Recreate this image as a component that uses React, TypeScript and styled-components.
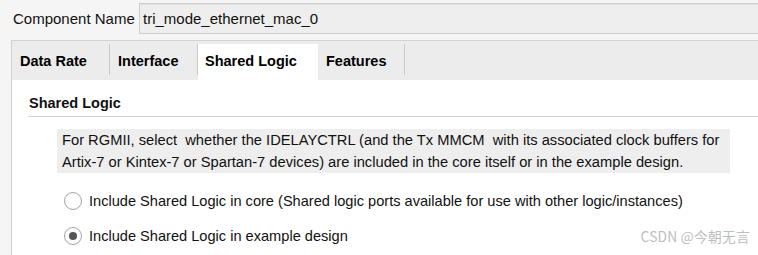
import React from 'react';
import styled, { createGlobalStyle } from 'styled-components';

const GlobalStyle = createGlobalStyle`
  html, body {
    margin: 0;
    padding: 0;
    background: #f5f5f5;
  }
  body {
    font-family: "Liberation Sans", Arial, sans-serif;
    color: #111;
  }
`;

const Page = styled.div`
  position: relative;
  width: 758px;
  height: 255px;
  overflow: hidden;
  display: flex;
  flex-direction: column;
`;

const TopRow = styled.div`
  display: flex;
  align-items: flex-start;
  height: 40px;
  padding: 3px 0 0 13px;
  box-sizing: border-box;
`;

const Label = styled.span`
  width: 126px;
  height: 31px;
  line-height: 31px;
  font-size: 15px;
`;

const NameField = styled.div`
  flex: 1;
  height: 31px;
  box-sizing: border-box;
  background: #eeeeee;
  border: 1px solid #cdcdcd;
  border-right: none;
  box-shadow: inset 0 1px 0 #e2e2e2;
  padding-left: 3px;
  line-height: 29px;
  font-size: 15px;
`;

const Panel = styled.div`
  flex: 1;
  margin-left: 11px;
  border-top: 1px solid #d2d2d2;
  border-left: 1px solid #cfcfcf;
  display: flex;
  flex-direction: column;
`;

const TabBar = styled.div`
  display: flex;
  height: 39px;
  background: #ececec;
  padding-top: 3px;
  box-sizing: border-box;
`;

const Tab = styled.div<{ $w: number; $active?: boolean }>`
  position: relative;
  width: ${p => p.$w}px;
  box-sizing: border-box;
  padding-left: ${p => (p.$active ? 7 : 8)}px;
  padding-bottom: 2px;
  display: flex;
  align-items: center;
  font-size: 14.5px;
  font-weight: bold;
  color: #000;
  background: ${p => (p.$active ? '#ffffff' : 'transparent')};

  &::after {
    content: '';
    display: ${p => (p.$active ? 'none' : 'block')};
    position: absolute;
    right: 0;
    top: 0;
    height: 31px;
    width: 1px;
    background: #c9c9c9;
  }
`;

const Content = styled.div`
  flex: 1;
  background: #ffffff;
  padding-left: 16px;
  display: flex;
  flex-direction: column;
`;

const Heading = styled.div`
  padding-top: 15px;
  padding-bottom: 4px;
  padding-left: 1px;
  line-height: 17px;
  font-size: 14.5px;
  font-weight: bold;
  border-bottom: 1px solid #d4d4d4;
`;

const Description = styled.div`
  margin: 12px 0 0 29px;
  width: 673px;
  box-sizing: border-box;
  padding: 0 5px;
  background: #eeeeee;
  font-size: 14.7px;
  line-height: 22px;
  white-space: pre;
`;

const Options = styled.div`
  display: flex;
  flex-direction: column;
  padding: 10px 0 0 36px;
`;

const OptionRow = styled.label`
  display: flex;
  align-items: center;
  gap: 7px;
  height: 35px;
  font-size: 14.6px;
`;

const Radio = styled.span<{ $checked?: boolean }>`
  width: 18px;
  height: 18px;
  box-sizing: border-box;
  border-radius: 50%;
  border: 1px solid #a3a3a3;
  background: #fff;
  display: flex;
  align-items: center;
  justify-content: center;

  &::before {
    content: '';
    display: ${p => (p.$checked ? 'block' : 'none')};
    width: 8px;
    height: 8px;
    border-radius: 50%;
    background: #555;
  }
`;

const Watermark = styled.div`
  position: absolute;
  right: 8px;
  bottom: 9px;
  font-family: "Noto Sans CJK SC", "Liberation Sans", sans-serif;
  font-size: 13.8px;
  color: #bdbdbd;
  letter-spacing: 0.2px;
`;

const tabs = [
  { name: 'Data Rate', w: 98 },
  { name: 'Interface', w: 88 },
  { name: 'Shared Logic', w: 120, active: true },
  { name: 'Features', w: 87 },
];

export default function App() {
  return (
    <Page>
      <GlobalStyle />
      <TopRow>
        <Label>Component Name</Label>
        <NameField>tri_mode_ethernet_mac_0</NameField>
      </TopRow>
      <Panel>
        <TabBar>
          {tabs.map(t => (
            <Tab key={t.name} $w={t.w} $active={t.active}>
              {t.name}
            </Tab>
          ))}
        </TabBar>
        <Content>
          <Heading>Shared Logic</Heading>
          <Description>
            {'For RGMII, select  whether the IDELAYCTRL (and the Tx MMCM  with its associated clock buffers for\nArtix-7 or Kintex-7 or Spartan-7 devices) are included in the core itself or in the example design.'}
          </Description>
          <Options>
            <OptionRow>
              <Radio />
              Include Shared Logic in core (Shared logic ports available for use with other logic/instances)
            </OptionRow>
            <OptionRow>
              <Radio $checked />
              Include Shared Logic in example design
            </OptionRow>
          </Options>
        </Content>
      </Panel>
      <Watermark>CSDN @今朝无言</Watermark>
    </Page>
  );
}
